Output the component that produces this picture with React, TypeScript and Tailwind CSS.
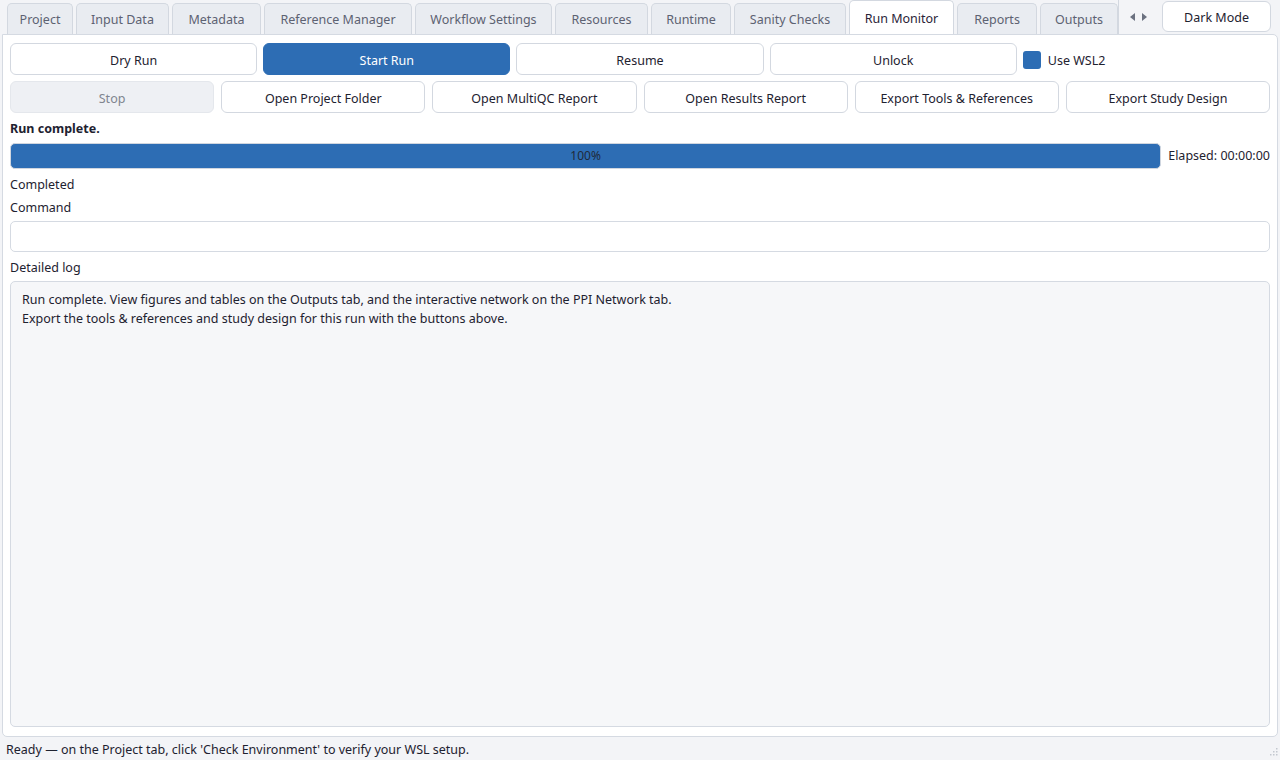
import { useState } from 'react';

const tabs = [
  { name: 'Project', w: 'w-[66px]' },
  { name: 'Input Data', w: 'w-[93px]' },
  { name: 'Metadata', w: 'w-[89px]' },
  { name: 'Reference Manager', w: 'w-[148px]' },
  { name: 'Workflow Settings', w: 'w-[137px]' },
  { name: 'Resources', w: 'w-[93px]' },
  { name: 'Runtime', w: 'w-[80px]' },
  { name: 'Sanity Checks', w: 'w-[112px]' },
  { name: 'Run Monitor', w: 'w-[105px]' },
  { name: 'Reports', w: 'w-[80px]' },
  { name: 'Outputs', w: 'w-[78px]' },
];

const topButtons = ['Dry Run', 'Start Run', 'Resume', 'Unlock'];
const bottomButtons = [
  'Stop',
  'Open Project Folder',
  'Open MultiQC Report',
  'Open Results Report',
  'Export Tools & References',
  'Export Study Design',
];

export default function App() {
  const [active, setActive] = useState('Run Monitor');
  const [wsl, setWsl] = useState(true);

  return (
    <div
      className="w-full h-[760px] bg-[#f3f4f7] flex flex-col text-[12.5px] text-[#1e2230] overflow-hidden"
      style={{ fontFamily: '"Noto Sans", "Open Sans", sans-serif' }}
    >
      {/* tab strip */}
      <div className="h-[34px] flex items-end pl-[7px] pr-[9px] shrink-0">
        <div className="flex items-end gap-[3px] h-full overflow-hidden w-[1114px]">
          {tabs.map((t) => {
            const on = t.name === active;
            return (
              <button
                key={t.name}
                onClick={() => setActive(t.name)}
                className={
                  on
                    ? `${t.w} shrink-0 h-[35px] -mb-px pt-[3px] relative z-10 bg-white border border-[#d3d8e0] border-b-white rounded-t-[5px] text-[#2a2438]`
                    : `${t.w} shrink-0 h-[31px] pt-[2px] bg-[#e9ecf1] border border-[#d3d8e0] border-b-0 rounded-t-[5px] text-[#5d6272]`
                }
              >
                {t.name}
              </button>
            );
          })}
          <div className="w-[30px] shrink-0 h-[31px] bg-[#e9ecf1] border border-[#d3d8e0] border-b-0 rounded-t-[5px]" />
        </div>
        <div className="w-[40px] h-full flex items-center justify-center gap-[7px] bg-[#f3f4f7] text-[#6b7180] -ml-[2px] border-l border-[#d3d8e0]">
          <svg width="5" height="8" viewBox="0 0 5 8"><path d="M5 0L0 4L5 8Z" fill="currentColor" /></svg>
          <svg width="5" height="8" viewBox="0 0 5 8"><path d="M0 0L5 4L0 8Z" fill="currentColor" /></svg>
        </div>
        <button className="ml-[4px] mb-[2px] w-[109px] h-[31px] pt-[4px] bg-white border border-[#d3d8e0] rounded-[6px] text-[#1e2230]">
          Dark Mode
        </button>
      </div>

      {/* panel */}
      <div className="mx-[2px] h-[704px] bg-white border border-[#d5dae2] rounded-b-[5px] rounded-tr-[5px] px-[7px] pt-[8px] pb-[9px] flex flex-col">
        <div className="grid grid-cols-5 gap-[6px] h-[32px]">
          {topButtons.map((b) => (
            <button
              key={b}
              className={
                b === 'Start Run'
                  ? 'pt-[4px] rounded-[6px] bg-[#2d6db4] border border-[#2d6db4] text-white'
                  : 'pt-[4px] rounded-[6px] bg-white border border-[#d3d8e0] text-[#1e2230]'
              }
            >
              {b}
            </button>
          ))}
          <label className="flex items-center gap-[7px] pt-[1px] cursor-pointer" onClick={() => setWsl(!wsl)}>
            <span
              className={
                wsl
                  ? 'w-[18px] h-[18px] rounded-[3px] bg-[#2d6db4]'
                  : 'w-[18px] h-[18px] rounded-[3px] bg-white border border-[#c5ccd6]'
              }
            />
            <span className="pt-[3px]">Use WSL2</span>
          </label>
        </div>

        <div className="grid grid-cols-6 gap-[7px] h-[32px] mt-[6px]">
          {bottomButtons.map((b) => (
            <button
              key={b}
              className={
                b === 'Stop'
                  ? 'pt-[4px] rounded-[6px] bg-[#eef0f4] border border-[#e4e7ec] text-[#80858f]'
                  : 'pt-[4px] rounded-[6px] bg-white border border-[#d3d8e0] text-[#1e2230]'
              }
            >
              {b}
            </button>
          ))}
        </div>

        <div className="mt-[7px] h-[18px] leading-[18px] font-bold">Run complete.</div>

        <div className="mt-[5px] flex items-center gap-[7px]">
          <div className="flex-1 h-[26px] rounded-[5px] bg-[#2d6db4] border border-[#d0d6df] flex items-center justify-center text-[12px] text-[#1f2a3a]">
            100%
          </div>
          <span className="leading-[18px]">Elapsed: 00:00:00</span>
        </div>

        <div className="mt-[7px] h-[18px] leading-[18px]">Completed</div>
        <div className="mt-[5px] h-[18px] leading-[18px]">Command</div>
        <div className="mt-[4px] h-[31px] rounded-[5px] border border-[#d5dae2] bg-white" />
        <div className="mt-[7px] h-[18px] leading-[18px]">Detailed log</div>
        <div className="mt-[4px] flex-1 rounded-[5px] border border-[#d5dae2] bg-[#f6f7f9] px-[11px] pt-[8px] leading-[19px]">
          <p>Run complete. View figures and tables on the Outputs tab, and the interactive network on the PPI Network tab.</p>
          <p>Export the tools &amp; references and study design for this run with the buttons above.</p>
        </div>
      </div>

      {/* status bar */}
      <div className="flex-1 relative flex items-center px-[6px] pt-[4px]">
        <span>Ready — on the Project tab, click 'Check Environment' to verify your WSL setup.</span>
        <svg className="absolute right-[2px] bottom-[2px]" width="10" height="10" viewBox="0 0 10 10">
          <g fill="#c3c8d0">
            <rect x="8" y="0" width="1.5" height="1.5" />
            <rect x="5" y="3" width="1.5" height="1.5" />
            <rect x="8" y="3" width="1.5" height="1.5" />
            <rect x="2" y="6" width="1.5" height="1.5" />
            <rect x="5" y="6" width="1.5" height="1.5" />
            <rect x="8" y="6" width="1.5" height="1.5" />
          </g>
        </svg>
      </div>
    </div>
  );
}
